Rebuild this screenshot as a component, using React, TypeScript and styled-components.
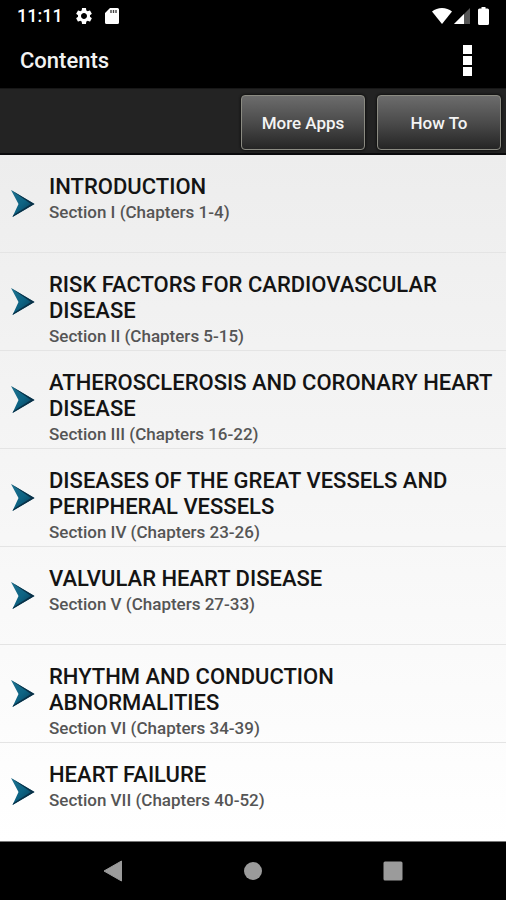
import React from "react";
import styled, { createGlobalStyle } from "styled-components";

const GlobalStyle = createGlobalStyle`
  *, *::before, *::after { box-sizing: border-box; }
  html, body { margin: 0; background: #000; }
  body { font-family: Roboto, "Liberation Sans", sans-serif; }
`;

const Screen = styled.div`
  display: flex;
  flex-direction: column;
  min-height: 100vh;
  background: #000;
`;

const StatusBar = styled.div`
  display: flex;
  align-items: center;
  justify-content: space-between;
  height: 32px;
  padding: 0 17px;
  color: #fff;
  font-size: 18px;
  font-weight: 500;
  line-height: 32px;
`;

const StatusGroup = styled.div<{ $gap: number }>`
  display: flex;
  align-items: center;
  gap: ${(p) => p.$gap}px;

  svg { display: block; }
`;

const AppBar = styled.header`
  display: flex;
  align-items: center;
  justify-content: space-between;
  height: 56px;
  padding: 0 34px 0 20px;
`;

const AppTitle = styled.h1`
  margin: 0;
  color: #f2f2f2;
  font-size: 22px;
  font-weight: 500;
  line-height: 26px;
  padding-top: 2px;
`;

const IconButton = styled.button`
  display: flex;
  align-items: center;
  justify-content: center;
  padding: 0;
  border: 0;
  background: none;
  cursor: pointer;

  svg { display: block; }
`;

const Toolbar = styled.div`
  display: flex;
  justify-content: flex-end;
  gap: 12px;
  height: 67px;
  padding: 6px 5px 5px;
  border-top: 1px solid #171717;
  border-bottom: 2px solid #0a0a0c;
  background: #232323;
`;

const ToolbarButton = styled.button`
  width: 124px;
  height: 55px;
  padding: 0;
  border: 1px solid #8b8b82;
  border-radius: 4px;
  background: linear-gradient(#6c6c6c, #4b4b4b 50%, #252525);
  box-shadow: 0 0 2px 1px #121212;
  color: #f4f4f4;
  font-family: inherit;
  font-size: 17px;
  font-weight: 500;
  cursor: pointer;
`;

const SectionList = styled.ul`
  flex: 1;
  margin: 0;
  padding: 0;
  list-style: none;
  background: linear-gradient(#ededed, #fff);
`;

const SectionItem = styled.li`
  border-bottom: 1px solid #e4e4e4;

  &:last-child { border-bottom: 0; }
`;

const SectionLink = styled.a`
  display: flex;
  align-items: center;
  gap: 14px;
  min-height: 97px;
  padding-left: 11px;
  color: inherit;
  text-decoration: none;

  svg { display: block; flex: none; }
`;

const SectionText = styled.span`
  flex: 1;
  align-self: flex-start;
  padding-top: 19px;
`;

const SectionTitle = styled.span`
  display: block;
  color: #141414;
  font-size: 22px;
  font-weight: 500;
  line-height: 26px;
`;

const SectionRange = styled.span`
  display: block;
  color: #555;
  font-size: 17px;
  font-weight: 500;
  line-height: 24px;
`;

const NavBar = styled.nav`
  display: flex;
  align-items: center;
  justify-content: center;
  gap: 120px;
  height: 59px;
  border-top: 1px solid #777;
`;

const sections = [
  { title: "INTRODUCTION", range: "Section I (Chapters 1-4)" },
  { title: "RISK FACTORS FOR CARDIOVASCULAR DISEASE", range: "Section II (Chapters 5-15)" },
  { title: "ATHEROSCLEROSIS AND CORONARY HEART DISEASE", range: "Section III (Chapters 16-22)" },
  { title: "DISEASES OF THE GREAT VESSELS AND PERIPHERAL VESSELS", range: "Section IV (Chapters 23-26)" },
  { title: "VALVULAR HEART DISEASE", range: "Section V (Chapters 27-33)" },
  { title: "RHYTHM AND CONDUCTION ABNORMALITIES", range: "Section VI (Chapters 34-39)" },
  { title: "HEART FAILURE", range: "Section VII (Chapters 40-52)" },
];

const GearIcon = () => (
  <svg width="20" height="20" viewBox="0 0 24 24" fill="#fff" aria-hidden="true">
    <path d="M19.14 12.94c.04-.3.06-.61.06-.94 0-.32-.02-.64-.07-.94l2.03-1.58c.18-.14.23-.41.12-.61l-1.92-3.32c-.12-.22-.37-.29-.59-.22l-2.39.96c-.5-.38-1.03-.7-1.62-.94l-.36-2.54c-.04-.24-.24-.41-.48-.41h-3.84c-.24 0-.43.17-.47.41l-.36 2.54c-.59.24-1.13.57-1.62.94l-2.39-.96c-.22-.08-.47 0-.59.22L2.74 8.87c-.12.21-.08.47.12.61l2.03 1.58c-.05.3-.09.63-.09.94s.02.64.07.94l-2.03 1.58c-.18.14-.23.41-.12.61l1.92 3.32c.12.22.37.29.59.22l2.39-.96c.5.38 1.03.7 1.62.94l.36 2.54c.05.24.24.41.48.41h3.84c.24 0 .44-.17.47-.41l.36-2.54c.59-.24 1.13-.56 1.62-.94l2.39.96c.22.08.47 0 .59-.22l1.92-3.32c.12-.22.07-.47-.12-.61l-2.01-1.58zM12 15.6c-1.98 0-3.6-1.62-3.6-3.6s1.62-3.6 3.6-3.6 3.6 1.62 3.6 3.6-1.62 3.6-3.6 3.6z" />
  </svg>
);

const SdCardIcon = () => (
  <svg width="14" height="16" viewBox="0 0 14 16" aria-hidden="true">
    <path d="M5 0h7.500a1.500 1.500 0 0 1 1.500 1.500v13a1.500 1.500 0 0 1-1.500 1.500h-11A1.500 1.500 0 0 1 0 14.500V5z" fill="#fff" />
    <path d="M6 2v3M8.500 2v3M11 2v3" stroke="#444" strokeWidth="1.400" />
  </svg>
);

const WifiIcon = () => (
  <svg width="20" height="16" viewBox="0 0 20 16" aria-hidden="true">
    <path d="M10 16 0 3.500C2.800 1.200 6.200 0 10 0s7.200 1.200 10 3.500z" fill="#fff" />
  </svg>
);

const SignalIcon = () => (
  <svg width="16" height="16" viewBox="0 0 16 16" aria-hidden="true">
    <path d="M0 16 16 0v16z" fill="#555" />
    <path d="M0 16 10 6v10z" fill="#fff" />
  </svg>
);

const BatteryIcon = () => (
  <svg width="11" height="18" viewBox="0 0 11 18" aria-hidden="true">
    <path d="M3.500 0h4v1.500H9.500A1.500 1.500 0 0 1 11 3v13.500a1.500 1.500 0 0 1-1.500 1.500h-8A1.500 1.500 0 0 1 0 16.500V3a1.500 1.500 0 0 1 1.500-1.500h2z" fill="#fff" />
  </svg>
);

const OverflowIcon = () => (
  <svg width="9" height="31" viewBox="0 0 9 31" fill="#fff" aria-hidden="true">
    <path d="M0 0h9v9H0zM0 11h9v9H0zM0 22h9v9H0z" />
  </svg>
);

const ArrowIcon = () => (
  <svg width="24" height="28" viewBox="0 0 24 28" aria-hidden="true">
    <defs>
      <linearGradient id="arrowFill" x1="0" y1="0" x2="1" y2="1">
        <stop offset="0" stopColor="#1f7390" />
        <stop offset="0.500" stopColor="#0d6383" />
        <stop offset="1" stopColor="#083048" />
      </linearGradient>
    </defs>
    <path d="M0 0 23.500 14 1.500 27 7.500 14z" fill="url(#arrowFill)" />
    <path d="M0 0 23.500 14 1.500 27l1-2L20 14z" fill="#0a3046" />
  </svg>
);

export default function App() {
  return (
    <Screen>
      <GlobalStyle />
      <StatusBar>
        <StatusGroup $gap={11}>
          <time>11:11</time>
          <GearIcon />
          <SdCardIcon />
        </StatusGroup>
        <StatusGroup $gap={8}>
          <StatusGroup $gap={2}>
            <WifiIcon />
            <SignalIcon />
          </StatusGroup>
          <BatteryIcon />
        </StatusGroup>
      </StatusBar>
      <AppBar>
        <AppTitle>Contents</AppTitle>
        <IconButton type="button" aria-label="More options">
          <OverflowIcon />
        </IconButton>
      </AppBar>
      <Toolbar>
        <ToolbarButton type="button">More Apps</ToolbarButton>
        <ToolbarButton type="button">How To</ToolbarButton>
      </Toolbar>
      <SectionList>
        {sections.map((section) => (
          <SectionItem key={section.title}>
            <SectionLink href="#">
              <ArrowIcon />
              <SectionText>
                <SectionTitle>{section.title}</SectionTitle>
                <SectionRange>{section.range}</SectionRange>
              </SectionText>
            </SectionLink>
          </SectionItem>
        ))}
      </SectionList>
      <NavBar>
        <IconButton type="button" aria-label="Back">
          <svg width="20" height="22" viewBox="0 0 20 22" aria-hidden="true">
            <path d="M1 11 18.500 1v20z" fill="#9b9b9b" stroke="#9b9b9b" strokeLinejoin="round" />
          </svg>
        </IconButton>
        <IconButton type="button" aria-label="Home">
          <svg width="20" height="20" viewBox="0 0 20 20" aria-hidden="true">
            <circle cx="10" cy="10" r="9" fill="#9b9b9b" />
          </svg>
        </IconButton>
        <IconButton type="button" aria-label="Recent apps">
          <svg width="20" height="20" viewBox="0 0 20 20" aria-hidden="true">
            <rect width="19" height="19" x="0.500" y="0.500" rx="1.500" fill="#9b9b9b" />
          </svg>
        </IconButton>
      </NavBar>
    </Screen>
  );
}
